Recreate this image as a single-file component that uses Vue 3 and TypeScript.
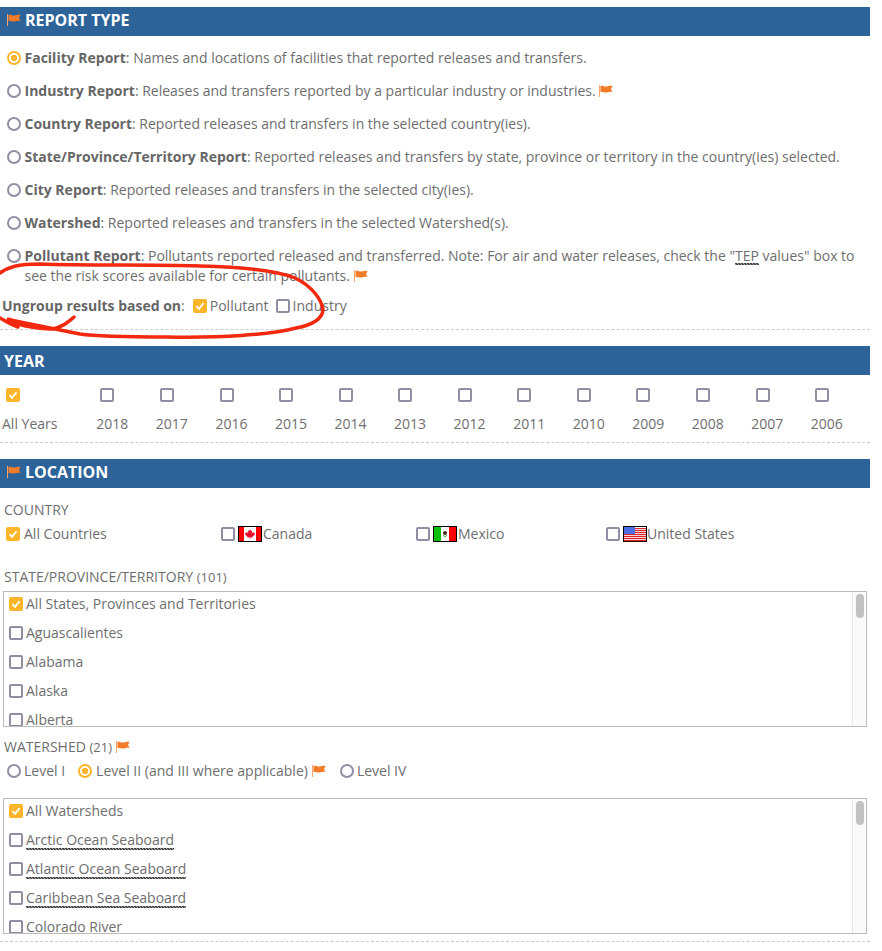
<template>
  <div class="page">
    <div class="form">
      <section class="section">
        <h2 class="bar"><FlagIcon class="flag" />REPORT TYPE</h2>
        <div class="reports">
          <div v-for="r in reports" :key="r.name" class="report">
            <span class="radio" :class="{ on: r.on }"></span>
            <p class="report-text">
              <b>{{ r.name }}</b>: {{ r.text }}
              <template v-if="r.tep">"<span class="spell">TEP</span> values" box to see the risk scores available for certain pollutants.{{ " " }}</template>
              <FlagIcon v-if="r.flag" class="flag inline" />
            </p>
          </div>
        </div>
        <div class="ungroup">
          <span><b>Ungroup results based on</b>:</span>
          <span class="check on"><CheckMark /></span><span class="after">Pollutant</span>
          <span class="check second"></span><span class="after">Industry</span>
        </div>
      </section>

      <section class="section">
        <h2 class="bar plain">YEAR</h2>
        <div class="years">
          <div v-for="(y, i) in years" :key="y" class="year" :class="{ first: i === 0 }">
            <span class="check" :class="{ on: i === 0 }"><CheckMark v-if="i === 0" /></span>
            <span class="year-label">{{ y }}</span>
          </div>
        </div>
      </section>

      <section class="section last">
        <h2 class="bar"><FlagIcon class="flag" />LOCATION</h2>
        <div class="location">
          <div class="label country-label">COUNTRY</div>
          <div class="countries">
            <div class="country c-all"><span class="check on"><CheckMark /></span><span class="after wide">All Countries</span></div>
            <div class="country c-ca">
              <span class="check"></span>
              <svg class="cflag" width="24" height="16" viewBox="0 0 24 16">
                <rect width="24" height="16" fill="#000" />
                <rect x="1" y="1" width="22" height="14" fill="#fff" />
                <rect x="1" y="1" width="5" height="14" fill="#f00" />
                <rect x="18" y="1" width="5" height="14" fill="#f00" />
                <path d="M12 3l1 2 1.200-.5-.4 2.400 1.500-.9.4 1 1.300-.2-.5 1.600.5.4-2.400 1.700.2 1-2.400-.3v1.600h-.8v-1.600l-2.400.3.2-1-2.400-1.700.5-.4-.5-1.600 1.300.2.4-1 1.500.9-.4-2.400 1.200.5z" fill="#e8112d" />
              </svg>
              <span>Canada</span>
            </div>
            <div class="country c-mx">
              <span class="check"></span>
              <svg class="cflag" width="24" height="16" viewBox="0 0 24 16">
                <rect width="24" height="16" fill="#000" />
                <rect x="1" y="1" width="7" height="14" fill="#0ac00f" />
                <rect x="8" y="1" width="8" height="14" fill="#fff" />
                <rect x="16" y="1" width="7" height="14" fill="#f00" />
                <circle cx="12" cy="7" r="2" fill="#4a2a1a" />
                <path d="M10 9.500q2 2 4 0" stroke="#3b9a4a" stroke-width="1" fill="none" />
              </svg>
              <span>Mexico</span>
            </div>
            <div class="country c-us">
              <span class="check"></span>
              <svg class="cflag us" width="24" height="16" viewBox="0 0 24 16">
                <rect width="24" height="16" fill="#000" />
                <rect x="1" y="1" width="22" height="14" fill="#fff" />
                <rect v-for="s in usStripes" :key="s" x="1" :y="s" width="22" height="1.200" fill="#e0262c" />
                <rect x="1" y="1" width="11" height="7" fill="#4d6fe6" />
              </svg>
              <span>United States</span>
            </div>
          </div>

          <div class="label state-label">STATE/PROVINCE/TERRITORY <small>(101)</small></div>
          <div class="listbox">
            <div class="items">
              <div v-for="(s, i) in states" :key="s" class="item">
                <span class="check" :class="{ on: i === 0 }"><CheckMark v-if="i === 0" /></span>
                <span class="after">{{ s }}</span>
              </div>
            </div>
            <div class="scroll"><div class="thumb"></div></div>
          </div>

          <div class="label watershed-label">WATERSHED <small>(21)</small> <FlagIcon class="flag inline" /></div>
          <div class="levels">
            <span class="radio"></span><span class="after lvl">Level I</span>
            <span class="radio on"></span><span class="after wide">Level II (and III where applicable)</span>
            <FlagIcon class="flag inline lvl2" />
            <span class="radio"></span><span class="after">Level IV</span>
          </div>
          <div class="listbox">
            <div class="items">
              <div v-for="(s, i) in watersheds" :key="s.name" class="item">
                <span class="check" :class="{ on: i === 0 }"><CheckMark v-if="i === 0" /></span>
                <span class="after" :class="{ spell: s.spell }">{{ s.name }}</span>
              </div>
            </div>
            <div class="scroll"><div class="thumb"></div></div>
          </div>
          <div class="end-rule"></div>
        </div>
      </section>
    </div>

    <svg class="scribble" width="350" height="90" viewBox="0 260 350 90">
      <path d="M0 273C8 267 18 264 40 264C90 266 150 264 200 266C240 267 275 270 295 278C312 286 322 300 323 310C322 320 312 325 296 328C270 335 220 338 167 337C130 337 100 337 80 334C60 330 40 326 25 323C15 321 7 319 7 319C15 324 30 328 50 329C60 329 68 322 74 317" fill="none" stroke="#f3290f" stroke-width="3.500" stroke-linecap="round" />
      <path d="M0 318C6 322 12 325 18 327" fill="none" stroke="#f3290f" stroke-width="3.500" stroke-linecap="round" />
    </svg>
  </div>
</template>

<script setup lang="ts">
import { h } from "vue"

const FlagIcon = () =>
  h("svg", { width: 14, height: 12, viewBox: "0 0 14 12" }, [
    h("rect", { x: 0, y: 0, width: 1, height: 12, fill: "#f6a56b" }),
    h("path", { d: "M1.500 1C4 .2 5 1.800 7.500 1.500S11 .6 13.500 1L12 4l1.500 3c-2.500-.4-3.500.2-6 .5S4 6.500 1.500 7.300z", fill: "#f47b27" }),
  ])

const CheckMark = () =>
  h("svg", { width: 10, height: 10, viewBox: "0 0 10 10" }, [
    h("path", { d: "M1.500 5.200L4 7.800L8.500 2.200", fill: "none", stroke: "#fff", "stroke-width": 1.8 }),
  ])

const reports = [
  { name: "Facility Report", text: "Names and locations of facilities that reported releases and transfers.", on: true },
  { name: "Industry Report", text: "Releases and transfers reported by a particular industry or industries.", flag: true },
  { name: "Country Report", text: "Reported releases and transfers in the selected country(ies)." },
  { name: "State/Province/Territory Report", text: "Reported releases and transfers by state, province or territory in the country(ies) selected." },
  { name: "City Report", text: "Reported releases and transfers in the selected city(ies)." },
  { name: "Watershed", text: "Reported releases and transfers in the selected Watershed(s)." },
  { name: "Pollutant Report", text: "Pollutants reported released and transferred. Note: For air and water releases, check the", tep: true, flag: true },
]

const years = ["All Years", "2018", "2017", "2016", "2015", "2014", "2013", "2012", "2011", "2010", "2009", "2008", "2007", "2006"]

const usStripes = [2, 4, 6, 8, 10, 12, 14]

const states = ["All States, Provinces and Territories", "Aguascalientes", "Alabama", "Alaska", "Alberta"]

const watersheds = [
  { name: "All Watersheds" },
  { name: "Arctic Ocean Seaboard", spell: true },
  { name: "Atlantic Ocean Seaboard", spell: true },
  { name: "Caribbean Sea Seaboard", spell: true },
  { name: "Colorado River" },
]
</script>

<style>
html,
body {
  margin: 0;
  background: #fff;
}
</style>

<style scoped>
.page {
  position: relative;
  width: 882px;
  height: 951px;
  overflow: hidden;
  font-family: "Open Sans", "Noto Sans", sans-serif;
  font-size: 14px;
  line-height: 20px;
  color: #6e6e6e;
}

.form {
  width: 870px;
  padding-top: 7px;
}

.section {
  padding-bottom: 16px;
}

.section.last {
  padding-bottom: 0;
}

.bar {
  display: flex;
  align-items: center;
  box-sizing: border-box;
  height: 29px;
  margin: 0;
  padding: 0 0 3px 4px;
  background: #2e6399;
  color: #fff;
  font-size: 16px;
  font-weight: 700;
}

.bar.plain {
  padding-bottom: 0;
}

.flag {
  flex: none;
  margin: 0 4px 0 3px;
}

.flag.inline {
  margin: 0 0 -1px 0;
}

.reports {
  display: flex;
  flex-direction: column;
  gap: 13px;
  padding: 12px 4px 0 7px;
}

.report {
  display: flex;
  gap: 3.5px;
}

.report-text {
  margin: 0;
}

b {
  font-weight: 700;
  color: #666;
}

.radio {
  flex: none;
  box-sizing: border-box;
  width: 14px;
  height: 14px;
  margin-top: 3px;
  border: 2px solid #8f8fa3;
  border-radius: 50%;
  background: #fff;
}

.radio.on {
  border-color: #fdb62c;
  background: radial-gradient(circle, #fdb62c 0 3px, #fff 3.5px);
}

.check {
  flex: none;
  display: inline-flex;
  align-items: center;
  justify-content: center;
  box-sizing: border-box;
  width: 14px;
  height: 14px;
  border: 2px solid #8f8fa3;
  border-radius: 2px;
  background: #fff;
}

.check.on {
  border-color: #fdb62c;
  background: #fdb62c;
}

.after {
  margin-left: 3px;
}

.after.wide {
  margin-left: 4px;
}

.ungroup {
  display: flex;
  align-items: center;
  height: 20px;
  margin-top: 10px;
  padding-left: 2px;
  padding-bottom: 13px;
  border-bottom: 1px dashed #ccc;
}

.ungroup > span:first-child {
  margin-right: 8px;
}

.check.second {
  margin-left: 7px;
}

.years {
  display: flex;
  padding: 13px 0 8px 2px;
  border-bottom: 1px dashed #ccc;
}

.year {
  display: flex;
  flex-direction: column;
  width: 59.55px;
  flex: none;
}

.year.first {
  width: 94.3px;
}

.year .check {
  margin-left: 4.2px;
  margin-bottom: 12px;
}

.year.first .check {
  margin-left: 4px;
}

.year-label {
  white-space: nowrap;
}

.location {
  padding: 12px 0 0 0;
}

.label {
  padding-left: 4px;
}

.label small {
  font-size: 13px;
}

.countries {
  display: flex;
  align-items: center;
  height: 20px;
  margin-top: 4px;
  padding-left: 6px;
}

.country {
  display: flex;
  align-items: center;
}

.c-all {
  width: 215px;
}

.c-ca {
  width: 195px;
}

.c-mx {
  width: 190px;
}

.cflag {
  margin: 0 1px 0 3px;
}

.cflag.us {
  margin-right: 0;
}

.state-label {
  margin-top: 23px;
  margin-bottom: 4px;
}

.listbox {
  display: flex;
  height: 136px;
  box-sizing: border-box;
  margin-left: 3px;
  width: 864px;
  border: 1px solid #bbb;
  overflow: hidden;
}

.items {
  flex: 1;
  padding: 2px 0 0 5px;
}

.item {
  display: flex;
  align-items: center;
  height: 20px;
  margin-bottom: 9px;
}

.scroll {
  width: 14px;
  flex: none;
  padding: 2px 3px 0;
  box-sizing: border-box;
  background: #fafafa;
  border-left: 1px solid #e8e8e8;
}

.thumb {
  width: 8px;
  height: 24px;
  border-radius: 4px;
  background: #c2c2c2;
}

.watershed-label {
  margin-top: 10px;
}

.levels {
  display: flex;
  align-items: center;
  height: 20px;
  margin: 4px 0 17px;
  padding-left: 7px;
}

.levels .radio {
  margin-top: 0;
}

.lvl {
  margin-right: 13px;
}

.flag.lvl2 {
  margin: 0 14px 0 4px;
}

.spell {
  background-image:
    linear-gradient(45deg, transparent 35%, #444 35% 65%, transparent 65%),
    linear-gradient(-45deg, transparent 35%, #444 35% 65%, transparent 65%);
  background-size: 3px 2px;
  background-position: 0 100%, 1.5px 100%;
  background-repeat: repeat-x;
}

.end-rule {
  margin-top: 7px;
  border-bottom: 1px dashed #ccc;
}

.scribble {
  position: absolute;
  left: 0;
  top: 260px;
  pointer-events: none;
}
</style>
